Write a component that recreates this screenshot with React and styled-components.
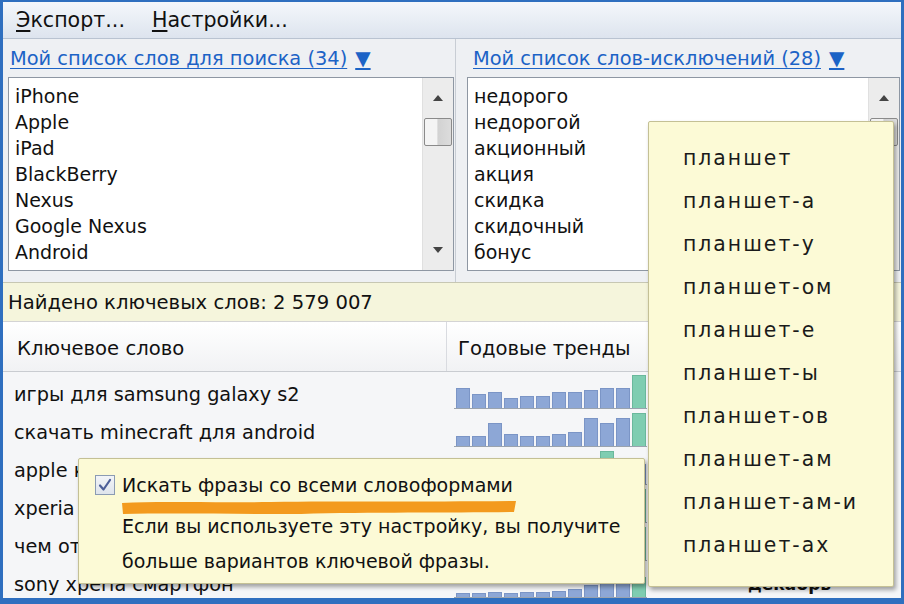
import * as React from 'react';
import styled, { createGlobalStyle } from 'styled-components';

const GlobalStyle = createGlobalStyle`
  html, body {
    margin: 0;
    padding: 0;
    background: #ffffff;
    overflow: hidden;
  }
`;

const FONT = `"DejaVu Sans", "Noto Sans", sans-serif`;

const Window = styled.div`
  position: relative;
  width: 904px;
  height: 604px;
  box-sizing: border-box;
  border-left: 3px solid #2f6fbf;
  border-top: 2px solid #2f6fbf;
  border-right: 3px solid #2f6fbf;
  border-bottom: 6px solid #2f6fbf;
  background: #eef0f3;
  overflow: hidden;
  font-family: ${FONT};
  color: #111;
  display: flex;
  flex-direction: column;
`;

const MenuBar = styled.div`
  height: 36px;
  flex: none;
  display: flex;
  align-items: center;
  gap: 27px;
  padding: 0 13px;
  background: linear-gradient(#f4f7fb, #dde4ee);
  border-bottom: 1px solid #b9c3d1;
  font-size: 20.6px;
`;

const MenuItem = styled.span`
  color: #111;
  & u {
    text-decoration-thickness: 2px;
    text-underline-offset: 3px;
  }
`;

const Panels = styled.div`
  height: 243px;
  flex: none;
  display: grid;
  grid-template-columns: 452px 1fr;
  background: #eef0f3;
`;

const Panel = styled.div`
  display: flex;
  flex-direction: column;
  padding: 0 1px 0 ${(p) => p.$left}px;
  border-left: ${(p) => (p.$divider ? '1px solid #c8cdd4' : 'none')};
`;

const ListLink = styled.a`
  height: 38px;
  display: flex;
  align-items: center;
  margin-left: ${(p) => p.$indent}px;
  color: #1c63c6;
  font-size: 19.4px;
  text-decoration: underline;
  text-underline-offset: 3px;
  cursor: pointer;
  & span {
    margin-left: 8px;
    font-size: 20px;
  }
`;

const ListBox = styled.div`
  height: 194px;
  box-sizing: border-box;
  display: flex;
  background: #fff;
  border: 1px solid #8e97a3;
`;

const ListItems = styled.div`
  flex: 1;
  padding: 5px 0 0 6px;
`;

const ListItem = styled.div`
  height: 26px;
  line-height: 26px;
  font-size: 19px;
  white-space: nowrap;
`;

const ScrollBar = styled.div`
  width: 30px;
  flex: none;
  display: flex;
  flex-direction: column;
  align-items: center;
  background: #ececec;
  border-left: 1px solid #e0e0e0;
`;

const ScrollArrow = styled.div`
  height: 40px;
  width: 100%;
  display: flex;
  align-items: center;
  justify-content: center;
  margin-top: ${(p) => (p.$down ? 'auto' : '0')};
`;

const ScrollThumb = styled.div`
  width: 28px;
  height: 28px;
  box-sizing: border-box;
  border: 1px solid #8a8a8a;
  border-radius: 2px;
  background: linear-gradient(90deg, #f4f4f4 0%, #f4f4f4 45%, #d2d2d2 50%, #dcdcdc 100%);
`;

const StatusBar = styled.div`
  height: 40px;
  flex: none;
  box-sizing: border-box;
  display: flex;
  align-items: center;
  padding-left: 5px;
  background: #f5f5dc;
  border-top: 1px solid #c7c7b3;
  border-bottom: 1px solid #d4d4d4;
  font-size: 19.6px;
`;

const GridHeader = styled.div`
  height: 50px;
  flex: none;
  box-sizing: border-box;
  display: grid;
  grid-template-columns: 444px 1fr;
  background: linear-gradient(#ffffff, #f1f2f4);
  border-bottom: 1px solid #c9ccd1;
  font-size: 19.6px;
`;

const HeaderCell = styled.div`
  display: flex;
  align-items: center;
  padding-left: ${(p) => p.$pad}px;
  padding-top: 3px;
  border-right: ${(p) => (p.$sep ? '1px solid #d9dbe0' : 'none')};
`;

const Rows = styled.div`
  flex: 1;
  padding-top: 3px;
  background: #f5f6f8;
`;

const Row = styled.div`
  height: 38px;
  display: grid;
  grid-template-columns: 444px 200px 1fr;
  font-size: 19.3px;
`;

const Cell = styled.div`
  display: flex;
  align-items: center;
  padding-left: 11px;
  white-space: nowrap;
  overflow: hidden;
`;

const TrendCell = styled.div`
  display: flex;
  align-items: flex-end;
  gap: 2px;
  padding: 0 0 6px 9px;
  position: relative;
  &::after {
    content: '';
    position: absolute;
    left: 7px;
    right: 0;
    bottom: 5px;
    height: 1px;
    background: #9aa3ae;
  }
`;

const Bar = styled.div`
  width: 14px;
  flex: none;
  box-sizing: border-box;
  background: ${(p) => (p.$peak ? '#7fcdb1' : '#8da7d6')};
  border: 1px solid ${(p) => (p.$peak ? '#6ab89c' : '#7b95c6')};
  border-bottom: none;
`;

const MonthCell = styled.div`
  display: flex;
  align-items: center;
  padding-left: 101px;
  font-weight: bold;
  font-size: 17px;
`;

const Tooltip = styled.div`
  position: absolute;
  left: ${(p) => p.$x}px;
  top: ${(p) => p.$y}px;
  width: ${(p) => p.$w}px;
  height: ${(p) => p.$h}px;
  box-sizing: border-box;
  background: #fcfad6;
  border: 1px solid #c4c095;
  border-radius: 2px;
  box-shadow: 2px 3px 4px rgba(0, 0, 0, 0.35);
`;

const HintBody = styled.div`
  padding: 14px 0 0 16px;
  font-size: 19px;
`;

const CheckLine = styled.div`
  display: flex;
  align-items: center;
  gap: 7px;
  height: 24px;
`;

const CheckBox = styled.div`
  width: 20px;
  height: 20px;
  box-sizing: border-box;
  border: 1px solid #8b9bb3;
  background: linear-gradient(#f2f4f8, #dfe4ec);
  display: flex;
  align-items: center;
  justify-content: center;
`;

const Marker = styled.svg`
  display: block;
  margin: 4px 0 0 26px;
`;

const HintText = styled.div`
  margin-left: 27px;
  margin-top: -6px;
  line-height: 35px;
`;

const FormsList = styled.div`
  padding: 15px 0 0 34px;
`;

const FormItem = styled.div`
  height: 43px;
  line-height: 43px;
  font-size: 20.4px;
  letter-spacing: 2px;
  color: #1a1a1a;
`;

const Arrow = ({ down }) => (
  <svg width="12" height="8" viewBox="0 0 12 8">
    <path d={down ? 'M1 1 L11 1 L6 7 Z' : 'M1 7 L11 7 L6 1 Z'} fill="#444" />
  </svg>
);

const searchWords = ['iPhone', 'Apple', 'iPad', 'BlackBerry', 'Nexus', 'Google Nexus', 'Android'];
const stopWords = ['недорого', 'недорогой', 'акционный', 'акция', 'скидка', 'скидочный', 'бонус'];

// month column is only visible for the last row, the rest sits under the hint
const rows = [
  { kw: 'игры для samsung galaxy s2', bars: [20, 14, 16, 10, 12, 12, 16, 16, 18, 20, 20, 33] },
  { kw: 'скачать minecraft для android', bars: [10, 10, 23, 12, 10, 10, 12, 14, 28, 23, 28, 33] },
  { kw: 'apple купить iphone', bars: [14, 12, 16, 14, 12, 12, 16, 18, 20, 33, 22, 20] },
  { kw: 'xperia z купить', bars: [12, 14, 16, 14, 12, 12, 14, 18, 20, 22, 24, 33] },
  { kw: 'чем отличается iphone', bars: [16, 14, 12, 12, 14, 12, 16, 18, 20, 22, 26, 33] },
  { kw: 'sony xperia смартфон', bars: [4, 4, 5, 4, 5, 5, 6, 8, 12, 14, 16, 20], month: 'декабрь' },
];

const forms = [
  'планшет',
  'планшет-а',
  'планшет-у',
  'планшет-ом',
  'планшет-е',
  'планшет-ы',
  'планшет-ов',
  'планшет-ам',
  'планшет-ам-и',
  'планшет-ах',
];

const WordList = ({ words, thumb }) => (
  <ListBox>
    <ListItems>
      {words.map((w) => (
        <ListItem key={w}>{w}</ListItem>
      ))}
    </ListItems>
    <ScrollBar>
      <ScrollArrow>
        <Arrow />
      </ScrollArrow>
      {thumb && <ScrollThumb />}
      <ScrollArrow $down>
        <Arrow down />
      </ScrollArrow>
    </ScrollBar>
  </ListBox>
);

const App = () => {
  return (
    <>
      <GlobalStyle />
      <Window>
        <MenuBar>
          <MenuItem>
            <u>Э</u>кспорт...
          </MenuItem>
          <MenuItem>
            <u>Н</u>астройки...
          </MenuItem>
        </MenuBar>

        <Panels>
          <Panel $left={5}>
            <ListLink $indent={2}>
              Мой список слов для поиска (34)<span>▼</span>
            </ListLink>
            <WordList words={searchWords} thumb />
          </Panel>
          <Panel $left={11} $divider>
            <ListLink $indent={6}>
              Мой список слов-исключений (28)<span>▼</span>
            </ListLink>
            <WordList words={stopWords} thumb />
          </Panel>
        </Panels>

        <StatusBar>Найдено ключевых слов: 2 579 007</StatusBar>

        <GridHeader>
          <HeaderCell $pad={14} $sep>
            Ключевое слово
          </HeaderCell>
          <HeaderCell $pad={11}>Годовые тренды</HeaderCell>
        </GridHeader>

        <Rows>
          {rows.map((r) => {
            const max = Math.max(...r.bars);
            return (
              <Row key={r.kw}>
                <Cell>{r.kw}</Cell>
                <TrendCell>
                  {r.bars.map((h, i) => (
                    <Bar key={i} $peak={h === max} style={{ height: h }} />
                  ))}
                </TrendCell>
                <MonthCell>{r.month}</MonthCell>
              </Row>
            );
          })}
        </Rows>

        <Tooltip $x={75} $y={456} $w={567} $h={126}>
          <HintBody>
            <CheckLine>
              <CheckBox>
                <svg width="14" height="14" viewBox="0 0 14 14">
                  <path
                    d="M2 7.5 L5.5 11.5 L12 2"
                    fill="none"
                    stroke="#4d5f98"
                    strokeWidth="2.2"
                    strokeLinecap="round"
                    strokeLinejoin="round"
                  />
                </svg>
              </CheckBox>
              Искать фразы со всеми словоформами
            </CheckLine>
            <Marker width="396" height="14" viewBox="0 0 396 14">
              <path
                d="M1 2 C40 0 90 2 150 1 C220 0 300 1 395 0 L393 11 C330 12 250 11 180 13 C110 13 50 12 2 13 Z"
                fill="#f39a1e"
              />
            </Marker>
            <HintText>
              Если вы используете эту настройку, вы получите
              <br />
              больше вариантов ключевой фразы.
            </HintText>
          </HintBody>
        </Tooltip>

        <Tooltip $x={645} $y={119} $w={246} $h={466}>
          <FormsList>
            {forms.map((f) => (
              <FormItem key={f}>{f}</FormItem>
            ))}
          </FormsList>
        </Tooltip>
      </Window>
    </>
  );
};

export default App;
